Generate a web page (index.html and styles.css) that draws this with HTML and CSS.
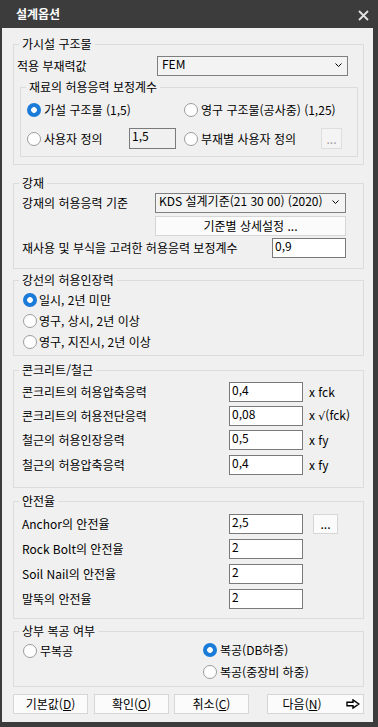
FILE: index.html
```html
<!DOCTYPE html>
<html lang="ko">
<head>
<meta charset="utf-8">
<title>설계옵션</title>
<link rel="stylesheet" href="styles.css">
</head>
<body>
<div class="window">
  <div class="titlebar">
    <span class="title">설계옵션</span>
    <svg class="close" width="11" height="11" viewBox="0 0 11 11"><path d="M1 1L10 10M10 1L1 10" stroke="#e4e4e4" stroke-width="1.8" fill="none"/></svg>
  </div>
  <div class="client">
    <fieldset class="grp g1">
      <legend>가시설 구조물</legend>
      <div class="gbody b1">
        <div class="row row-top">
          <span class="lbl w-l1">적용 부재력값</span>
          <div class="combo combo1"><span class="combo-text">FEM</span><svg class="chev" width="7" height="4" viewBox="0 0 7 4"><path d="M0.5 0.5L3.5 3.5L6.5 0.5" stroke="#000" fill="none"/></svg></div>
        </div>
        <fieldset class="grp g1a">
          <legend>재료의 허용응력 보정계수</legend>
          <div class="gbody b1a">
            <div class="rrow rr1">
              <div class="cell c-left"><span class="radio on"></span><span>가설 구조물 (1,5)</span></div>
              <div class="cell"><span class="radio"></span><span>영구 구조물(공사중) (1,25)</span></div>
            </div>
            <div class="rrow rr2">
              <div class="cell c-left"><span class="radio"></span><span class="lbl w-user">사용자 정의</span><span class="tb tb-dis tb-small">1,5</span></div>
              <div class="cell"><span class="radio"></span><span class="lbl w-member">부재별 사용자 정의</span><span class="btn dots dots-dis">...</span></div>
            </div>
          </div>
        </fieldset>
      </div>
    </fieldset>

    <fieldset class="grp g2">
      <legend>강재</legend>
      <div class="gbody b2">
        <div class="row row1">
          <span class="lbl w-l2">강재의 허용응력 기준</span>
          <div class="combo combo2"><span class="combo-text">KDS 설계기준(21 30 00) (2020)</span><svg class="chev" width="7" height="4" viewBox="0 0 7 4"><path d="M0.5 0.5L3.5 3.5L6.5 0.5" stroke="#000" fill="none"/></svg></div>
        </div>
        <div class="btn btn-std">기준별 상세설정 ...</div>
        <div class="row row3">
          <span class="lbl w-l3">재사용 및 부식을 고려한 허용응력 보정계수</span>
          <span class="tb tb-w">0,9</span>
        </div>
      </div>
    </fieldset>

    <fieldset class="grp g3">
      <legend>강선의 허용인장력</legend>
      <div class="gbody b3">
        <div class="rline"><span class="radio on"></span><span>일시, 2년 미만</span></div>
        <div class="rline"><span class="radio"></span><span>영구, 상시, 2년 이상</span></div>
        <div class="rline"><span class="radio"></span><span>영구, 지진시, 2년 이상</span></div>
      </div>
    </fieldset>

    <fieldset class="grp g4">
      <legend>콘크리트/철근</legend>
      <div class="gbody b4">
        <div class="row frow"><span class="lbl w-f">콘크리트의 허용압축응력</span><span class="tb tb-w">0,4</span><span class="unit">x fck</span></div>
        <div class="row frow"><span class="lbl w-f">콘크리트의 허용전단응력</span><span class="tb tb-w">0,08</span><span class="unit">x <span class="sqrt">√</span>(fck)</span></div>
        <div class="row frow"><span class="lbl w-f">철근의 허용인장응력</span><span class="tb tb-w">0,5</span><span class="unit">x fy</span></div>
        <div class="row frow frow-last"><span class="lbl w-f">철근의 허용압축응력</span><span class="tb tb-w">0,4</span><span class="unit">x fy</span></div>
      </div>
    </fieldset>

    <fieldset class="grp g5">
      <legend>안전율</legend>
      <div class="gbody b5">
        <div class="row srow"><span class="lbl w-f">Anchor의 안전율</span><span class="tb tb-w">2,5</span><span class="btn dots dots-s">...</span></div>
        <div class="row srow"><span class="lbl w-f">Rock Bolt의 안전율</span><span class="tb tb-w">2</span></div>
        <div class="row srow"><span class="lbl w-f">Soil Nail의 안전율</span><span class="tb tb-w">2</span></div>
        <div class="row srow"><span class="lbl w-f">말뚝의 안전율</span><span class="tb tb-w">2</span></div>
      </div>
    </fieldset>

    <fieldset class="grp g6">
      <legend>상부 복공 여부</legend>
      <div class="gbody b6">
        <div class="col col-left">
          <div class="rline6 l6a"><span class="radio"></span><span>무복공</span></div>
        </div>
        <div class="col">
          <div class="rline6 r6a"><span class="radio on"></span><span>복공(DB하중)</span></div>
          <div class="rline6 r6b"><span class="radio"></span><span>복공(중장비 하중)</span></div>
        </div>
      </div>
    </fieldset>

    <div class="buttons">
      <div class="btn bbtn b-def">기본값(<u>D</u>)</div>
      <div class="btn bbtn b-ok">확인(<u>O</u>)</div>
      <div class="btn bbtn b-cancel">취소(<u>C</u>)</div>
      <div class="btn bbtn b-next"><span class="next-text">다음(<u>N</u>)</span><svg class="next-arrow" width="14" height="10" viewBox="0 0 14 10"><path d="M1 3.2H7V0.9L12.8 5L7 9.1V6.8H1Z" stroke="#000" stroke-width="1.4" fill="#fff" stroke-linejoin="miter"/></svg></div>
    </div>
  </div>
</div>
</body>
</html>
```

FILE: styles.css
```css
* { box-sizing: border-box; }
html, body { margin: 0; padding: 0; }
body {
  background: #3c3c3c;
  font-family: "Noto Sans CJK KR", "Noto Sans", "Liberation Sans", sans-serif;
  font-size: 12px;
  line-height: 16px;
  color: #000;
}
.window {
  width: 378px;
  height: 727px;
  display: flex;
  flex-direction: column;
  background: #3c3c3c;
}
.titlebar {
  flex: none;
  height: 28px;
  display: flex;
  align-items: center;
  padding: 0 9px 0 16px;
}
.title { color: #fff; font-weight: 700; }
.close { margin-left: auto; margin-top: 2px; }
.client {
  flex: none;
  height: 694px;
  margin: 0 5px 0 2px;
  background: #f0f0f0;
  display: flow-root;
}

/* group boxes */
.grp {
  margin: 0 9px 0 11px;
  padding: 0;
  border: 1px solid #dcdcdc;
  min-width: 0;
}
.grp > legend {
  margin-left: 5px;
  padding: 0 3px;
  height: 16px;
  line-height: 16px;
}
.gbody { display: flow-root; }

.row { display: flex; align-items: center; height: 20px; }
.lbl { flex: none; white-space: nowrap; }

/* controls */
.combo {
  flex: none;
  width: 191px;
  height: 20px;
  border: 1px solid #7f7f7f;
  background: #f3f3f3;
  display: flex;
  align-items: flex-start;
  padding: 0 5px 0 4px;
  line-height: 13px;
  white-space: nowrap;
}
.chev { margin-left: auto; margin-top: 6px; flex: none; }
.combo2 { padding-left: 3px; padding-right: 6px; }

.tb {
  flex: none;
  height: 20px;
  border: 1px solid #7a7a7a;
  background: #fff;
  padding: 0 2px;
  line-height: 13px;
  white-space: nowrap;
}
.tb-w { width: 74px; }
.tb-small { width: 47px; height: 21px; }
.tb-dis { background: #f0f0f0; }

.btn {
  flex: none;
  height: 20px;
  border: 1px solid #d6d6d6;
  background: #fbfbfb;
  display: flex;
  align-items: center;
  justify-content: center;
  white-space: nowrap;
}
.dots { width: 21px; height: 21px; }
.dots-dis { color: #a0a0a0; background: #f4f4f4; border-color: #dedede; }
.dots-s { width: 25px; height: 20px; margin-left: 10px; }

.radio {
  flex: none;
  width: 14px;
  height: 14px;
  border-radius: 50%;
  border: 1px solid #9c9c9c;
  background: #fff;
}
.radio.on {
  border: none;
  background: radial-gradient(circle at center, #fff 0 2.5px, #1a7bd8 3.2px);
}

/* group 1 */
.g1 { margin-top: 8px; }
.b1 { padding: 0 5px 7px 3px; }
.row-top { margin-top: 4px; }
.w-l1 { width: 140px; }
.g1a { margin: 3px 0 0 3px; }
.b1a { padding: 0 0 7px 6px; }
.rrow { display: flex; align-items: center; }
.rr1 { margin-top: 5px; height: 20px; }
.rr2 { margin-top: 8px; height: 21px; }
.cell { display: flex; align-items: center; gap: 3px; white-space: nowrap; }
.c-left { flex: none; width: 157px; }
.w-user { width: 82px; }
.w-member { width: 117px; }

/* group 2 */
.g2 { margin-top: 10px; }
.b2 { padding: 0 0 10px 8px; }
.row1 { margin-top: 2px; }
.w-l2 { width: 133px; }
.btn-std { margin: 3px 0 0 133px; width: 191px; }
.row3 { margin-top: 2px; }
.w-l3 { width: 250px; }

/* group 3 */
.g3 { margin-top: 3px; }
.b3 { padding: 1px 0 3px 9px; }
.rline { display: flex; align-items: center; gap: 2px; height: 21px; white-space: nowrap; }

/* group 4 */
.g4 { margin-top: 6px; }
.b4 { padding: 0 0 12px 8px; }
.frow { margin-top: 4px; }
.frow-last { margin-top: 5px; }
.w-f { width: 207px; }
.unit { margin-left: 6px; white-space: nowrap; }
.sqrt { font-family: "DejaVu Sans", "Liberation Sans", sans-serif; font-size: 11px; }

/* group 5 */
.g5 { margin-top: 5px; }
.b5 { padding: 0 0 9px 8px; }
.srow { margin-top: 5px; }

/* group 6 */
.g6 { margin-top: 4px; }
.b6 { display: flex; padding: 0 0 4px 9px; }
.col-left { flex: none; width: 180px; }
.rline6 { display: flex; align-items: center; gap: 3px; height: 20px; white-space: nowrap; }
.l6a { margin-top: 2px; }
.r6a { margin-top: 1px; }
.r6b { margin-top: 2px; }

/* bottom buttons */
.buttons { display: flex; margin-top: 7px; }
.bbtn { width: 75px; }
.b-def { margin-left: 11px; }
.b-ok { margin-left: 6px; }
.b-cancel { margin-left: 5px; }
.b-next { margin-left: 18px; width: 97px; justify-content: flex-start; }
.next-text { width: 68px; text-align: center; }
.next-arrow { margin-left: auto; margin-right: 3px; }
u { text-underline-offset: 1px; }
```
